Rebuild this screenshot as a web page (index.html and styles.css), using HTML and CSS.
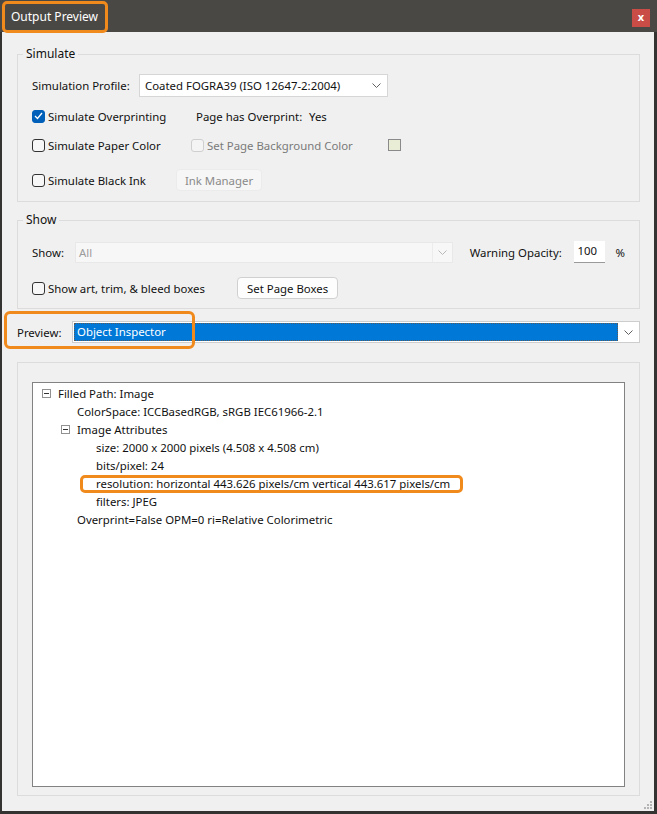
FILE: index.html
```html
<!DOCTYPE html>
<html lang="en">
<head>
  <meta charset="UTF-8" />
  <title>Output Preview</title>
  <link rel="stylesheet" href="styles.css">
</head>
<body>
  <div class="window">
    <div class="titlebar">
      <span class="title">Output Preview</span>
      <span class="close">x</span>
    </div>
    <div class="content">
      <fieldset class="group group-simulate">
        <legend>Simulate</legend>
        <div class="row r-profile">
          <span class="lbl lbl-profile">Simulation Profile:</span>
          <div class="select select-profile">
            <span class="select-text">Coated FOGRA39 (ISO 12647-2:2004)</span>
            <svg class="chev" width="9" height="5" viewBox="0 0 9 5"><polyline points="0.5,0.5 4.5,4.5 8.5,0.5" fill="none" stroke="#606060" stroke-width="1"/></svg>
          </div>
        </div>
        <div class="row r-over">
          <label class="check col-over">
            <span class="box checked"><svg width="9" height="8" viewBox="0 0 9 8"><polyline points="1,4 3.5,6.5 8,1" fill="none" stroke="#fff" stroke-width="1.3"/></svg></span>
            Simulate Overprinting
          </label>
          <span class="lbl lbl-has">Page has Overprint:</span>
          <span>Yes</span>
        </div>
        <div class="row r-paper">
          <label class="check col-paper"><span class="box"></span>Simulate Paper Color</label>
          <label class="check disabled col-bg"><span class="box"></span>Set Page Background Color</label>
          <span class="swatch"></span>
        </div>
        <div class="row r-black">
          <label class="check col-black"><span class="box"></span>Simulate Black Ink</label>
          <button class="btn btn-disabled">Ink Manager</button>
        </div>
      </fieldset>

      <fieldset class="group group-show">
        <legend>Show</legend>
        <div class="row r-show">
          <span class="lbl lbl-show">Show:</span>
          <div class="select select-show">
            <span class="select-text">All</span>
            <span class="divider"></span>
            <svg class="chev" width="9" height="5" viewBox="0 0 9 5"><polyline points="0.5,0.5 4.5,4.5 8.5,0.5" fill="none" stroke="#b8b8b8" stroke-width="1"/></svg>
          </div>
          <span class="lbl lbl-opacity">Warning Opacity:</span>
          <span class="num-input">100</span>
          <span class="pct">%</span>
        </div>
        <div class="row r-boxes">
          <label class="check col-boxes"><span class="box"></span>Show art, trim, &amp; bleed boxes</label>
          <button class="btn">Set Page Boxes</button>
        </div>
      </fieldset>

      <div class="row r-preview">
        <span class="lbl lbl-preview">Preview:</span>
        <div class="select select-preview">
          <span class="hl">Object Inspector</span>
          <svg class="chev" width="9" height="5" viewBox="0 0 9 5"><polyline points="0.5,0.5 4.5,4.5 8.5,0.5" fill="none" stroke="#606060" stroke-width="1"/></svg>
        </div>
      </div>

      <div class="group group-inspector">
        <div class="tree">
          <div class="node lv0"><span class="minus"></span>Filled Path: Image</div>
          <div class="node lv1">ColorSpace: ICCBasedRGB, sRGB IEC61966-2.1</div>
          <div class="node lv1 parent"><span class="minus"></span>Image Attributes</div>
          <div class="node lv2">size: 2000 x 2000 pixels (4.508 x 4.508 cm)</div>
          <div class="node lv2">bits/pixel: 24</div>
          <div class="node lv2"><span class="marked">resolution: horizontal 443.626 pixels/cm vertical 443.617 pixels/cm</span></div>
          <div class="node lv2">filters: JPEG</div>
          <div class="node lv1">Overprint=False OPM=0 ri=Relative Colorimetric</div>
        </div>
      </div>
    </div>
    <svg class="grip" width="10" height="10" viewBox="0 0 10 10">
      <rect x="7" y="1" width="2" height="2" fill="#b4b4b4"/>
      <rect x="4" y="4" width="2" height="2" fill="#b4b4b4"/>
      <rect x="7" y="4" width="2" height="2" fill="#b4b4b4"/>
      <rect x="1" y="7" width="2" height="2" fill="#b4b4b4"/>
      <rect x="4" y="7" width="2" height="2" fill="#b4b4b4"/>
      <rect x="7" y="7" width="2" height="2" fill="#b4b4b4"/>
    </svg>
  </div>
</body>
</html>
```

FILE: styles.css
```css
body {
  margin: 0;
  background: #f0f0f0;
  font-family: "Noto Sans", "Open Sans", sans-serif;
  font-size: 11.4px;
  color: #111;
}
.window {
  position: relative;
  width: 657px;
  height: 814px;
  box-sizing: border-box;
  display: flex;
  flex-direction: column;
  background: #f0f0f0;
  border-left: 2px solid #353331;
  border-right: 3px solid #353331;
  border-bottom: 3px solid #353331;
}
/* Title bar */
.titlebar {
  height: 32px;
  margin: 0 -3px 0 -2px;
  background: #4a4845;
  display: flex;
  align-items: flex-start;
  justify-content: space-between;
  padding-right: 7px;
}
.title {
  position: relative;
  z-index: 1;
  margin: 1px 0 0 2px;
  height: 32px;
  box-sizing: border-box;
  border: 3px solid #f08a1d;
  border-radius: 5px;
  padding: 0 7px 0 6px;
  font-size: 12px;
  line-height: 25px;
  color: #fff;
}
.close {
  margin-top: 9px;
  width: 18px;
  height: 18px;
  background: #c94c47;
  color: #fff;
  font-weight: bold;
  font-size: 11px;
  line-height: 16px;
  text-align: center;
}
/* Content */
.content {
  flex: 1;
  display: flex;
  flex-direction: column;
  padding: 14px 14px 0 15px;
}
.group {
  margin: 0;
  border: 1px solid #dcdcdc;
  padding: 0 14px;
  min-width: 0;
}
.group legend {
  padding: 0 3px;
  margin-left: -9px;
  line-height: 16px;
  font-size: 12px;
}
.group-simulate {
  padding-bottom: 10px;
}
.group-show {
  margin-top: 10px;
  padding-bottom: 9px;
}
.row {
  display: flex;
  align-items: center;
  white-space: nowrap;
}
.r-profile { height: 23px; margin-top: 12px; }
.r-over { height: 20px; margin-top: 9px; }
.r-paper { height: 20px; margin-top: 9px; }
.r-black { height: 22px; margin-top: 14px; }
.r-show { height: 22px; margin-top: 13px; }
.r-boxes { height: 22px; margin-top: 14px; }
.r-preview {
  position: relative;
  height: 22px;
  margin-top: 12px;
}
/* annotation box round the preview picker */
.r-preview::after {
  content: "";
  position: absolute;
  left: -13px;
  top: -10px;
  width: 191px;
  height: 38px;
  box-sizing: border-box;
  border: 3px solid #f08a1d;
  border-radius: 6px;
}
.lbl-profile { width: 107px; }
.lbl-has { width: 113px; }
.lbl-show { width: 43px; }
.lbl-opacity { margin-left: 17px; width: 104px; }
.lbl-preview { width: 55px; }
/* Selects */
.select {
  height: 100%;
  box-sizing: border-box;
  display: flex;
  align-items: center;
  background: #fff;
  border: 1px solid #d6d6d6;
}
.select-text {
  flex: 1;
  padding-left: 5px;
}
.chev {
  margin: 0 6px 0 4px;
}
.select-profile {
  width: 249px;
}
.select-show {
  width: 378px;
  height: 21px;
  background: #f7f7f7;
  border-color: #e8e8e8;
  color: #9c9c9c;
}
.select-show .select-text { padding-left: 3px; }
.divider {
  align-self: stretch;
  width: 1px;
  background: #ececec;
}
.select-show .chev { margin: 0 5px 0 5px; }
.select-preview {
  flex: 1;
  padding: 1px;
  border-color: #cdcdcd;
}
.hl {
  flex: 1;
  height: 100%;
  box-sizing: border-box;
  background: #0078d7;
  color: #fff;
  outline: 1px dotted #5a5a5a;
  outline-offset: -1px;
  padding-left: 3px;
  line-height: 18px;
}
.select-preview .chev { margin: 0 5px 0 6px; }
.num-input {
  width: 31px;
  height: 22px;
  box-sizing: border-box;
  background: #fff;
  border-bottom: 1px solid #9a9a9a;
  padding-left: 4px;
  line-height: 20px;
}
.pct { margin-left: 11px; }
/* Checkboxes */
.check {
  display: flex;
  align-items: center;
}
.box {
  width: 13px;
  height: 13px;
  box-sizing: border-box;
  margin-right: 3px;
  border: 1px solid #333;
  border-radius: 3px;
  background: #f7f7f7;
  display: flex;
  align-items: center;
  justify-content: center;
}
.box.checked {
  background: #005fb8;
  border-color: #005fb8;
}
.check.disabled { color: #7a7a7a; }
.check.disabled .box {
  border-color: #cfcfcf;
  background: #f4f4f4;
}
.col-over { width: 164px; }
.col-paper { width: 159px; }
.col-bg { width: 197px; }
.col-black { width: 144px; }
.col-boxes { width: 205px; }
.swatch {
  width: 13px;
  height: 12px;
  box-sizing: border-box;
  border: 1px solid #8a8a8a;
  background: #e9edd6;
}
/* Buttons */
.btn {
  height: 22px;
  padding: 0 9px;
  font-family: inherit;
  font-size: 11.4px;
  color: #111;
  background: #fdfdfd;
  border: 1px solid #d0d0d0;
  border-radius: 4px;
  white-space: nowrap;
}
.btn-disabled {
  width: 86px;
  padding: 0;
  background: #f6f6f6;
  border-color: #ebebeb;
  color: #8a8a8a;
}
/* Inspector */
.group-inspector {
  flex: 1;
  display: flex;
  flex-direction: column;
  margin: 19px 0 15px;
  padding: 19px 14px 8px;
}
.tree {
  flex: 1;
  background: #fff;
  border: 1px solid #828282;
  padding-top: 1px;
  color: #111;
}
.node {
  display: flex;
  align-items: center;
  height: 18px;
  white-space: nowrap;
}
.lv0 { padding-left: 9px; }
.lv1 { padding-left: 44px; }
.lv1.parent { padding-left: 28px; }
.lv2 { padding-left: 63px; }
.minus {
  position: relative;
  width: 9px;
  height: 9px;
  box-sizing: border-box;
  border: 1px solid #919191;
  margin-right: 7px;
}
.minus::after {
  content: "";
  position: absolute;
  left: 1px;
  right: 1px;
  top: 3px;
  height: 1px;
  background: #333;
}
.marked {
  position: relative;
}
/* annotation box round the resolution line */
.marked::after {
  content: "";
  position: absolute;
  left: -16px;
  right: -13px;
  top: -1px;
  bottom: -2px;
  border: 3px solid #f08a1d;
  border-radius: 5px;
}
.grip {
  position: absolute;
  right: 1px;
  bottom: 1px;
}
```
